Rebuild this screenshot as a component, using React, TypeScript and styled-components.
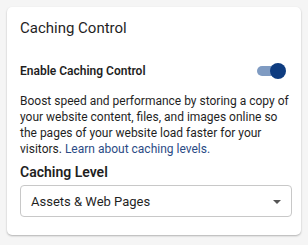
import React, { FC } from 'react';
import styled, { createGlobalStyle } from 'styled-components';

const GlobalStyle = createGlobalStyle`
	html, body {
		margin: 0;
		padding: 0;
		background: #f5f5f5;
		font-family: Roboto, "Open Sans", "Liberation Sans", sans-serif;
		color: #1f1f1f;
	}
`;

const Page = styled.div`
	padding: 7px;
	width: 308px;
	height: 245px;
	box-sizing: border-box;
`;

const Card = styled.section`
	width: 294px;
	height: 228px;
	box-sizing: border-box;
	background: #fff;
	border-radius: 5px;
	box-shadow: 0 1px 2px rgba(0, 0, 0, 0.28);
	padding: 11px 9px 0 13px;
	display: flex;
	flex-direction: column;
`;

const Title = styled.h2`
	margin: 0;
	font-size: 15px;
	font-weight: 400;
	line-height: 20px;
`;

const ToggleRow = styled.div`
	display: flex;
	align-items: center;
	justify-content: space-between;
	height: 16px;
	margin-top: 25px;
`;

const Label = styled.span`
	font-size: 12px;
	font-weight: 600;
	line-height: 16px;
`;

const Switch = styled.button<{ $on: boolean }>`
	position: relative;
	width: 29px;
	height: 16px;
	margin: -1px 6px 0 0;
	padding: 0;
	border: none;
	background: transparent;
	cursor: pointer;

	&::before {
		content: '';
		position: absolute;
		left: 0;
		right: 1px;
		top: 3px;
		height: 10px;
		border-radius: 5px;
		background: ${(p) => (p.$on ? '#7f9bc2' : '#c4c4c4')};
	}

	&::after {
		content: '';
		position: absolute;
		top: 0;
		left: ${(p) => (p.$on ? '13px' : '0')};
		width: 16px;
		height: 16px;
		border-radius: 50%;
		background: ${(p) => (p.$on ? '#0e3c80' : '#fafafa')};
	}
`;

const Description = styled.p`
	margin: 14px 0 0 0;
	font-size: 12px;
	line-height: 16px;
`;

const Link = styled.a`
	color: #2b4b85;
	text-decoration: none;
`;

const SectionLabel = styled.h3`
	margin: 5px 0 0 0;
	font-size: 14px;
	font-weight: 600;
	line-height: 20px;
`;

const Select = styled.div`
	margin-top: 3px;
	height: 32px;
	box-sizing: border-box;
	border: 1px solid #c8c8c8;
	border-radius: 4px;
	display: flex;
	align-items: center;
	justify-content: space-between;
	padding: 0 10px 0 10px;
	font-size: 13px;
`;

const Caret = styled.span`
	width: 0;
	height: 0;
	margin-top: 1px;
	border-left: 4px solid transparent;
	border-right: 4px solid transparent;
	border-top: 4px solid #555;
`;

const App: FC = () => (
	<Page>
		<GlobalStyle />
		<Card>
			<Title>Caching Control</Title>
			<ToggleRow>
				<Label>Enable Caching Control</Label>
				<Switch $on aria-label="Enable Caching Control" />
			</ToggleRow>
			<Description>
				Boost speed and performance by storing a copy of your website content, files, and images online so
				the pages of your website load faster for your visitors. <Link href="#">Learn about caching levels.</Link>
			</Description>
			<SectionLabel>Caching Level</SectionLabel>
			<Select>
				<span>Assets &amp; Web Pages</span>
				<Caret />
			</Select>
		</Card>
	</Page>
);

export default App;
